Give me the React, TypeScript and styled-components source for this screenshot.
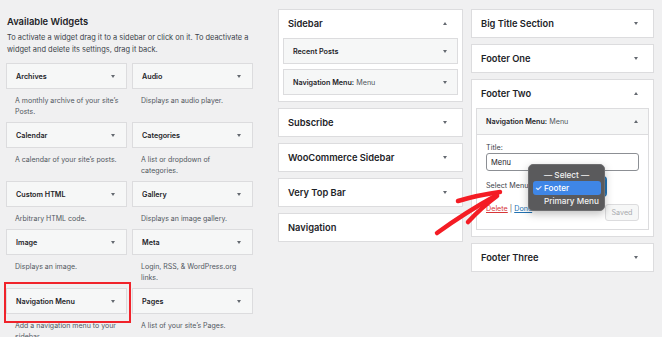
import React from "react";
import styled, { createGlobalStyle } from "styled-components";

const Global = createGlobalStyle`
  html, body { margin: 0; padding: 0; background: #f0f0f1; }
  body {
    font-family: Inter, "Liberation Sans", Arial, sans-serif;
    color: #1d2327;
    -webkit-font-smoothing: antialiased;
  }
  * { box-sizing: border-box; }
`;

const Page = styled.div`
  position: relative;
  width: 662px;
  height: 337px;
  overflow: hidden;
  display: flex;
  align-items: flex-start;
  padding: 9px 0 0 6px;
`;

const Available = styled.section`
  width: 247px;
  margin-right: 25px;
  flex: none;
`;

const Heading = styled.h2`
  margin: 7px 0 4px 1px;
  font-size: 9.4px;
  line-height: 12px;
  font-weight: 600;
`;

const Intro = styled.p`
  margin: 0 0 7px 1px;
  font-size: 7.45px;
  line-height: 12px;
  color: #3c434a;
  white-space: nowrap;
`;

const WidgetGrid = styled.div`
  display: grid;
  grid-template-columns: 121px 121px;
  column-gap: 5px;
`;

const WidgetItem = styled.div`
  position: relative;
`;

const Caret = styled.span<{ $up?: boolean }>`
  flex: none;
  width: 0;
  height: 0;
  border-left: 2.5px solid transparent;
  border-right: 2.5px solid transparent;
  ${(p) =>
    p.$up
      ? "border-bottom: 3px solid #646970;"
      : "border-top: 3px solid #646970;"}
`;

const WidgetBar = styled.div`
  height: 26px;
  display: flex;
  align-items: center;
  justify-content: space-between;
  padding: 0 11px 0 9px;
  background: #f6f7f7;
  border: 1px solid #dcdcde;
  font-size: 7.2px;
  font-weight: 600;
`;

const WidgetDesc = styled.p`
  margin: 0;
  padding: 6px 4px 5px 9px;
  font-size: 7px;
  line-height: 11px;
  color: #50575e;
  white-space: nowrap;
`;

const Highlight = styled.div`
  position: absolute;
  left: -2px;
  top: -6px;
  width: 127px;
  height: 41px;
  border: 2px solid #f0232b;
  pointer-events: none;
`;

const Column = styled.div<{ $w: number; $mr?: number }>`
  flex: none;
  width: ${(p) => p.$w}px;
  margin-right: ${(p) => p.$mr ?? 0}px;
  display: flex;
  flex-direction: column;
  gap: 6px;
`;

const Panel = styled.div`
  background: #fff;
  border: 1px solid #dcdcde;
`;

const PanelHead = styled.div`
  height: 27px;
  display: flex;
  align-items: center;
  justify-content: space-between;
  padding: 0 15px 0 9px;
  font-size: 9.3px;
  font-weight: 600;
`;

const PanelBody = styled.div`
  padding: 1px 4px 6px;
  display: flex;
  flex-direction: column;
  gap: 5px;
`;

const InnerBar = styled.div`
  height: 26px;
  display: flex;
  align-items: center;
  justify-content: space-between;
  padding: 0 10px 0 9px;
  background: #f6f7f7;
  border: 1px solid #dcdcde;
  font-size: 7.2px;
  font-weight: 600;
`;

const Sub = styled.span`
  font-weight: 400;
  color: #50575e;
`;

const InnerWidget = styled.div`
  border: 1px solid #dcdcde;
  background: #fff;
`;

const InnerHead = styled.div`
  height: 26px;
  display: flex;
  align-items: center;
  justify-content: space-between;
  padding: 0 10px 0 9px;
  background: #f6f7f7;
  border-bottom: 1px solid #dcdcde;
  font-size: 7.2px;
  font-weight: 600;
`;

const Form = styled.div`
  padding: 8px 9px 8px 9px;
  display: flex;
  flex-direction: column;
`;

const Label = styled.div`
  font-size: 7.2px;
  line-height: 10px;
  color: #3c434a;
`;

const TextInput = styled.div`
  height: 18px;
  border: 1px solid #8c8f94;
  border-radius: 3px;
  padding: 0 4px;
  display: flex;
  align-items: center;
  font-size: 7.5px;
  color: #1d2327;
  background: #fff;
`;

const SelectRow = styled.div`
  position: relative;
  margin-top: 5px;
  height: 20px;
  display: flex;
  align-items: center;
  gap: 4px;
`;

const SelectBox = styled.div`
  width: 70px;
  height: 19px;
  margin-left: auto;
  margin-right: 33px;
  border: 1px solid #2271b1;
  box-shadow: 0 0 0 1px #2271b1;
  border-radius: 3px;
  background: #fff;
`;

const Menu = styled.div`
  position: absolute;
  left: 42px;
  top: -12px;
  width: 77px;
  height: 47px;
  padding: 3px 3px 2px 4px;
  background: #5a5a5c;
  border: 1px solid #6e6e70;
  border-radius: 5px;
  box-shadow: 0 3px 8px rgba(0, 0, 0, 0.25);
  display: flex;
  flex-direction: column;
`;

const MenuItem = styled.div<{ $active?: boolean }>`
  position: relative;
  height: 14px;
  display: flex;
  align-items: center;
  padding-left: 11px;
  font-size: 8.2px;
  font-weight: 500;
  color: ${(p) => (p.$active ? "#fff" : "#f2f2f2")};
  background: ${(p) => (p.$active ? "#3f86e6" : "transparent")};
  border-radius: 3px;
  white-space: nowrap;
`;

const Check = styled.span`
  position: absolute;
  left: 2px;
  font-size: 8px;
`;

const Actions = styled.div`
  margin-top: 8px;
  display: flex;
  justify-content: space-between;
  align-items: flex-start;
`;

const LinkLine = styled.div`
  font-size: 7.2px;
  line-height: 10px;
  color: #50575e;
`;

const A = styled.span<{ $tone: "red" | "blue" }>`
  color: ${(p) => (p.$tone === "red" ? "#d63638" : "#2271b1")};
  text-decoration: underline;
`;

const SavedBtn = styled.div`
  width: 34px;
  height: 17px;
  display: flex;
  align-items: center;
  justify-content: center;
  border: 1px solid #dcdcde;
  border-radius: 3px;
  background: #f6f7f7;
  color: #a7aaad;
  font-size: 7.2px;
`;

const Annotation = styled.svg`
  position: absolute;
  left: 0;
  top: 0;
  pointer-events: none;
`;

type W = { name: string; desc: React.ReactNode; mark?: boolean };

const widgets: W[] = [
  { name: "Archives", desc: <>A monthly archive of your site’s<br />Posts.</> },
  { name: "Audio", desc: "Displays an audio player." },
  { name: "Calendar", desc: "A calendar of your site’s posts." },
  { name: "Categories", desc: <>A list or dropdown of<br />categories.</> },
  { name: "Custom HTML", desc: "Arbitrary HTML code." },
  { name: "Gallery", desc: "Displays an image gallery." },
  { name: "Image", desc: "Displays an image." },
  { name: "Meta", desc: <>Login, RSS, &amp; WordPress.org<br />links.</> },
  { name: "Navigation Menu", desc: <>Add a navigation menu to your<br />sidebar</>, mark: true },
  { name: "Pages", desc: "A list of your site’s Pages." },
];

const Collapsed: React.FC<{ title: string }> = ({ title }) => (
  <Panel>
    <PanelHead>
      {title}
      <Caret />
    </PanelHead>
  </Panel>
);

export default function App() {
  return (
    <>
      <Global />
      <Page>
        <Available>
          <Heading>Available Widgets</Heading>
          <Intro>
            To activate a widget drag it to a sidebar or click on it. To deactivate a
            <br />
            widget and delete its settings, drag it back.
          </Intro>
          <WidgetGrid>
            {widgets.map((w) => (
              <WidgetItem key={w.name}>
                <WidgetBar>
                  {w.name}
                  <Caret />
                </WidgetBar>
                <WidgetDesc>{w.desc}</WidgetDesc>
                {w.mark && <Highlight />}
              </WidgetItem>
            ))}
          </WidgetGrid>
        </Available>

        <Column $w={185} $mr={8}>
          <Panel>
            <PanelHead>
              Sidebar
              <Caret $up />
            </PanelHead>
            <PanelBody>
              <InnerBar>
                Recent Posts
                <Caret />
              </InnerBar>
              <InnerBar>
                <span>
                  Navigation Menu:<Sub> Menu</Sub>
                </span>
                <Caret />
              </InnerBar>
            </PanelBody>
          </Panel>
          <Collapsed title="Subscribe" />
          <Collapsed title="WooCommerce Sidebar" />
          <Collapsed title="Very Top Bar" />
          <Panel>
            <PanelHead>Navigation</PanelHead>
          </Panel>
        </Column>

        <Column $w={183}>
          <Collapsed title="Big Title Section" />
          <Collapsed title="Footer One" />
          <Panel>
            <PanelHead>
              Footer Two
              <Caret $up />
            </PanelHead>
            <PanelBody>
              <InnerWidget>
                <InnerHead>
                  <span>
                    Navigation Menu:<Sub> Menu</Sub>
                  </span>
                  <Caret $up />
                </InnerHead>
                <Form>
                  <Label>Title:</Label>
                  <TextInput>Menu</TextInput>
                  <SelectRow>
                    <Label>Select Menu:</Label>
                    <SelectBox />
                    <Menu>
                      <MenuItem>— Select —</MenuItem>
                      <MenuItem $active>
                        <Check>✓</Check>Footer
                      </MenuItem>
                      <MenuItem>Primary Menu</MenuItem>
                    </Menu>
                  </SelectRow>
                  <Actions>
                    <LinkLine>
                      <A $tone="red">Delete</A> | <A $tone="blue">Done</A>
                    </LinkLine>
                    <SavedBtn>Saved</SavedBtn>
                  </Actions>
                </Form>
              </InnerWidget>
            </PanelBody>
          </Panel>
          <Collapsed title="Footer Three" />
        </Column>

        <Annotation width="662" height="337" viewBox="0 0 662 337">
          <g fill="none" stroke="#f41c24" strokeWidth="4.5" strokeLinecap="round" strokeLinejoin="round">
            <path d="M437 233 Q466 212 497 195" />
            <path d="M458 201 Q478 195 500 192" />
            <path d="M468 222 Q482 207 497 196" />
          </g>
        </Annotation>
      </Page>
    </>
  );
}
